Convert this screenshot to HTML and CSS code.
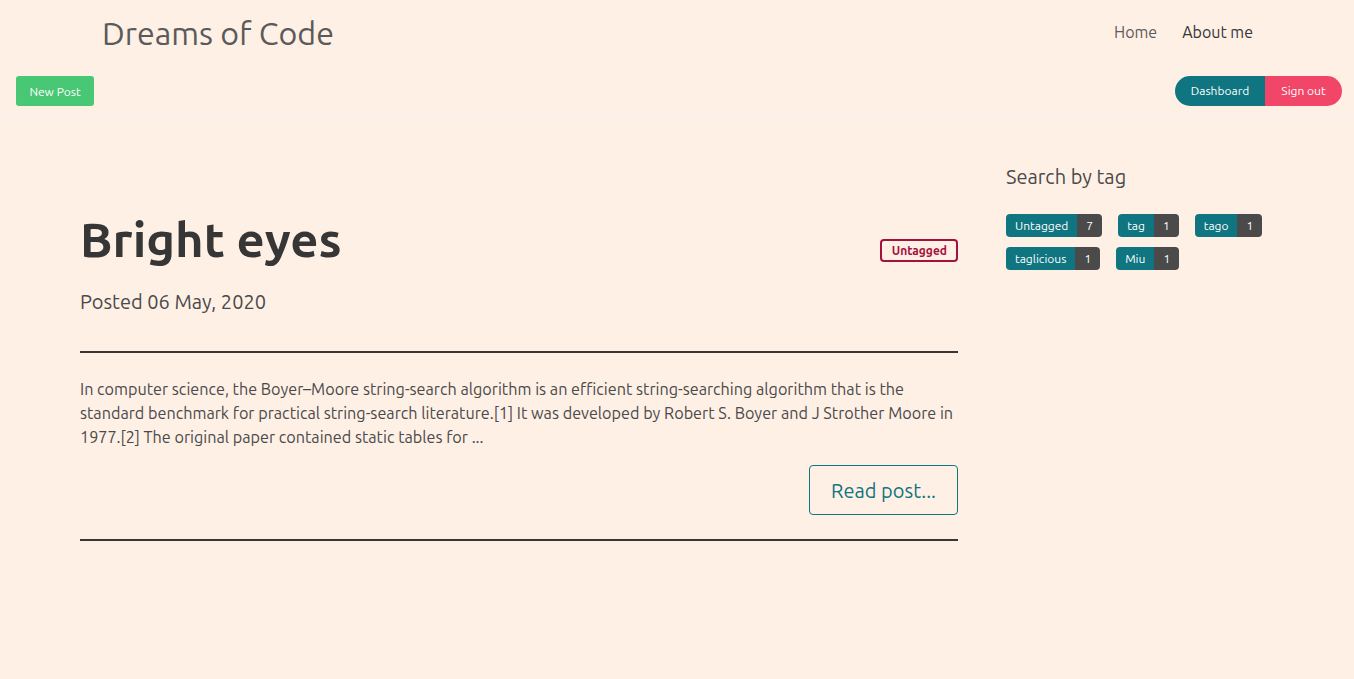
FILE: index.html
```html
<!DOCTYPE html>
<html lang="en">
<head>
<meta charset="utf-8">
<title>Dreams of Code</title>
<link rel="stylesheet" href="styles.css">
</head>
<body>
<header class="site-header">
  <nav class="navbar">
    <a class="brand" href="#">Dreams of Code</a>
    <div class="nav-links">
      <a class="nav-link" href="#">Home</a>
      <a class="nav-link nav-link-active" href="#">About me</a>
    </div>
  </nav>
  <div class="toolbar">
    <a class="btn btn-new" href="#">New Post</a>
    <div class="btn-group">
      <a class="btn btn-dash" href="#">Dashboard</a>
      <a class="btn btn-signout" href="#">Sign out</a>
    </div>
  </div>
</header>
<main class="main">
  <section class="posts">
    <article class="post">
      <div class="post-head">
        <h1 class="post-title">Bright eyes</h1>
        <span class="post-tag">Untagged</span>
      </div>
      <p class="post-date">Posted 06 May, 2020</p>
      <hr class="rule">
      <p class="post-excerpt">In computer science, the Boyer–Moore string-search algorithm is an efficient string-searching algorithm that is the standard benchmark for practical string-search literature.[1] It was developed by Robert S. Boyer and J Strother Moore in 1977.[2] The original paper contained static tables for ...</p>
      <div class="post-actions">
        <a class="btn-read" href="#">Read post...</a>
      </div>
      <hr class="rule">
    </article>
  </section>
  <aside class="sidebar">
    <h2 class="sidebar-title">Search by tag</h2>
    <div class="tag-list">
      <a class="tag-pair" href="#"><span class="tag-name">Untagged</span><span class="tag-count">7</span></a>
      <a class="tag-pair" href="#"><span class="tag-name">tag</span><span class="tag-count">1</span></a>
      <a class="tag-pair" href="#"><span class="tag-name">tago</span><span class="tag-count">1</span></a>
      <a class="tag-pair" href="#"><span class="tag-name">taglicious</span><span class="tag-count">1</span></a>
      <a class="tag-pair" href="#"><span class="tag-name">Miu</span><span class="tag-count">1</span></a>
    </div>
  </aside>
</main>
</body>
</html>
```
FILE: styles.css
```css
* { box-sizing: border-box; }
html, body {
  margin: 0;
  padding: 0;
  background: #fff0e6;
  font-family: "Ubuntu", "Open Sans", "Noto Sans", sans-serif;
  color: #4a4a4a;
}
a { text-decoration: none; }

.site-header {
  border-bottom: 2px solid #f6f1ee;
  height: 118px;
}
.navbar {
  width: 1152px;
  margin: 0 auto;
  height: 65px;
  display: flex;
  align-items: center;
  justify-content: space-between;
}
.brand {
  font-size: 32.2px;
  color: #5a5a5a;
  padding-left: 1px;
}
.nav-links {
  display: flex;
  gap: 25px;
  font-size: 16px;
  margin-top: -2px;
}
.nav-link { color: #5c5c5c; }
.nav-link-active { color: #363636; }

.toolbar {
  display: flex;
  justify-content: space-between;
  align-items: center;
  padding: 10px 12px 0 16px;
}
.btn {
  display: inline-flex;
  align-items: center;
  justify-content: center;
  height: 30px;
  font-size: 12px;
  color: #fff;
}
.btn-new {
  background: #48c774;
  border-radius: 3px;
  width: 78px;
  margin-top: 1px;
}
.btn-group { display: flex; }
.btn-dash {
  background: #0f7580;
  border-radius: 15px 0 0 15px;
  width: 90px;
}
.btn-signout {
  background: #f14668;
  border-radius: 0 15px 15px 0;
  width: 77px;
}

.main {
  display: flex;
  padding: 0 0 0 80px;
  gap: 48px;
}
.posts {
  width: 878px;
  flex: none;
  padding-top: 93px;
}
.post-head {
  display: flex;
  justify-content: space-between;
  align-items: center;
}
.post-title {
  margin: 0;
  font-size: 49px;
  line-height: 56px;
  font-weight: 700;
  color: #363636;
}
.post-tag {
  display: inline-flex;
  align-items: center;
  height: 23px;
  padding: 0 9px 0 10px;
  border: 2px solid #a3123e;
  border-radius: 4px;
  color: #a3123e;
  font-size: 12px;
  font-weight: 700;
  margin-top: 22px;
}
.post-date {
  margin: 22px 0 0;
  font-size: 20px;
  line-height: 26px;
  color: #4a4a4a;
}
.rule {
  border: 0;
  height: 2px;
  background: #363636;
  margin: 36px 0 0;
}
.post-excerpt {
  margin: 24px 0 0;
  font-size: 16.2px;
  line-height: 24px;
  color: #4a4a4a;
}
.post-actions {
  display: flex;
  justify-content: flex-end;
  margin-top: 16px;
}
.btn-read {
  display: inline-flex;
  align-items: center;
  height: 50px;
  padding: 0 21px;
  border: 1px solid #0f7580;
  border-radius: 4px;
  color: #0f7580;
  font-size: 20px;
}
.post-actions + .rule { margin-top: 24px; }

.sidebar {
  padding-top: 46px;
}
.sidebar-title {
  margin: 0;
  font-size: 20px;
  font-weight: 400;
  line-height: 26px;
  color: #4a4a4a;
}
.tag-list {
  display: flex;
  flex-wrap: wrap;
  gap: 10px 16px;
  width: 280px;
  margin-top: 24px;
}
.tag-pair {
  display: inline-flex;
  height: 23px;
  font-size: 12px;
  color: #fff;
  border-radius: 4px;
  overflow: hidden;
}
.tag-name {
  background: #0f7580;
  padding: 0 9px;
  display: flex;
  align-items: center;
}
.tag-count {
  background: #4a4a4a;
  padding: 0 9px;
  display: flex;
  align-items: center;
}
```
